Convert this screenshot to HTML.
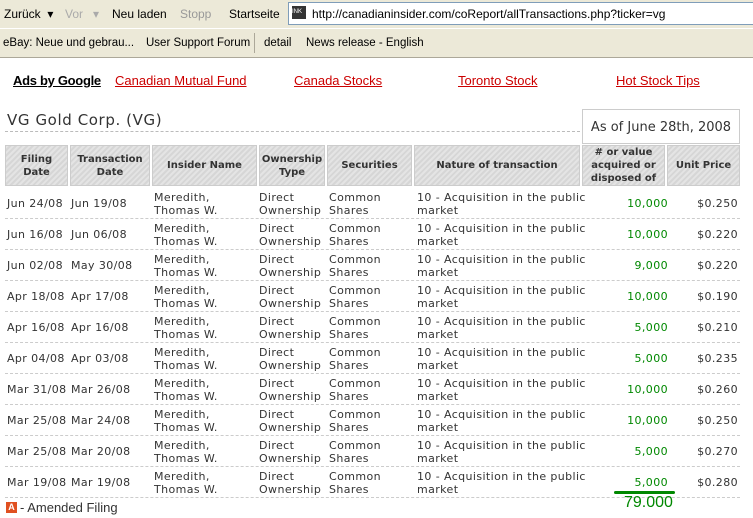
<!DOCTYPE html><html><head><style>
body{margin:0;width:753px;height:518px;overflow:hidden;background:#fff;font-family:"Liberation Sans",sans-serif;position:relative}
.a{position:absolute;white-space:nowrap}
.tb{position:absolute;left:0;top:0;width:753px;height:28px;background:#ece9d8;font-size:12px}
.bb{position:absolute;left:0;top:28px;width:753px;height:28px;background:#ece9d8;border-top:1px solid #fff;border-bottom:1px solid #aca899;font-size:11.5px}
.ad{font-size:13px;color:#c00;text-decoration:underline;top:73px}
.h{position:absolute;top:145px;height:41px;background:repeating-linear-gradient(135deg,#e4e4e4 0 2px,#d6d6d6 2px 4px);border:1px solid #ccc;box-sizing:border-box;font:bold 10px "DejaVu Sans",sans-serif;color:#333;display:flex;align-items:center;justify-content:center;text-align:center;line-height:13px}
.r{position:absolute;left:5px;width:735px;height:31px;border-bottom:1px dashed #ccc;font:11px "DejaVu Sans",sans-serif;color:#333;line-height:13px;letter-spacing:0.4px}
.r div{position:absolute;top:4px}
.g{color:#080}
</style></head><body>
<div class="tb">
<span class="a" style="left:4px;top:7px">Zurück &nbsp;▾</span>
<span class="a" style="left:65px;top:7px;color:#aaa">Vor &nbsp;&nbsp;▾</span>
<span class="a" style="left:112px;top:7px">Neu laden</span>
<span class="a" style="left:180px;top:7px;color:#999">Stopp</span>
<span class="a" style="left:229px;top:7px">Startseite</span>
<div class="a" style="left:288px;top:2px;width:470px;height:21px;background:#fff;border:1px solid #7f9db9"></div>
<div class="a" style="left:292px;top:6px;width:14px;height:13px;background:#333;color:#fff;font-size:6px;line-height:13px">INK</div>
<span class="a" style="left:312px;top:7px">http://canadianinsider.com/coReport/allTransactions.php?ticker=vg</span>
</div>
<div class="bb">
<span class="a" style="left:3px;top:8px">eBay: Neue und gebrau...</span>
<span class="a" style="left:146px;top:8px">User Support Forum</span>
<div class="a" style="left:254px;top:4px;width:1px;height:20px;background:#aca899"></div>
<span class="a" style="left:264px;top:8px">detail</span>
<span class="a" style="left:306px;top:8px">News release - English</span>
</div>
<span class="a" style="left:13px;top:73px;font-size:13px;font-weight:bold;text-decoration:underline;letter-spacing:-0.3px">Ads by Google</span>
<span class="a ad" style="left:115px">Canadian Mutual Fund</span>
<span class="a ad" style="left:294px">Canada Stocks</span>
<span class="a ad" style="left:458px">Toronto Stock</span>
<span class="a ad" style="left:616px">Hot Stock Tips</span>
<span class="a" style="left:7px;top:111px;font:15px 'DejaVu Sans',sans-serif;color:#333;letter-spacing:0.6px">VG Gold Corp. (VG)</span>
<div class="a" style="left:5px;top:131px;width:575px;border-bottom:1px dashed #bbb"></div>
<div class="a" style="left:582px;top:109px;width:156px;height:33px;border:1px solid #ccc;font:13px 'DejaVu Sans',sans-serif;color:#333;line-height:35px;text-align:center">As of June 28th, 2008</div>
<div class="h" style="left:5px;width:63px">Filing<br>Date</div>
<div class="h" style="left:70px;width:80px">Transaction<br>Date</div>
<div class="h" style="left:152px;width:105px">Insider Name</div>
<div class="h" style="left:259px;width:66px">Ownership<br>Type</div>
<div class="h" style="left:327px;width:85px">Securities</div>
<div class="h" style="left:414px;width:166px">Nature of transaction</div>
<div class="h" style="left:582px;width:83px"># or value<br>acquired or<br>disposed of</div>
<div class="h" style="left:667px;width:73px">Unit Price</div>
<div class="r" style="top:187px"><div style="left:2px;top:10px">Jun 24/08</div><div style="left:66px;top:10px">Jun 19/08</div><div style="left:149px">Meredith,<br>Thomas W.</div><div style="left:254px">Direct<br>Ownership</div><div style="left:324px">Common<br>Shares</div><div style="left:412px">10 - Acquisition in the public<br>market</div><div class="g" style="right:72px;top:10px">10,000</div><div style="right:2px;top:10px">$0.250</div></div>
<div class="r" style="top:218px"><div style="left:2px;top:10px">Jun 16/08</div><div style="left:66px;top:10px">Jun 06/08</div><div style="left:149px">Meredith,<br>Thomas W.</div><div style="left:254px">Direct<br>Ownership</div><div style="left:324px">Common<br>Shares</div><div style="left:412px">10 - Acquisition in the public<br>market</div><div class="g" style="right:72px;top:10px">10,000</div><div style="right:2px;top:10px">$0.220</div></div>
<div class="r" style="top:249px"><div style="left:2px;top:10px">Jun 02/08</div><div style="left:66px;top:10px">May 30/08</div><div style="left:149px">Meredith,<br>Thomas W.</div><div style="left:254px">Direct<br>Ownership</div><div style="left:324px">Common<br>Shares</div><div style="left:412px">10 - Acquisition in the public<br>market</div><div class="g" style="right:72px;top:10px">9,000</div><div style="right:2px;top:10px">$0.220</div></div>
<div class="r" style="top:280px"><div style="left:2px;top:10px">Apr 18/08</div><div style="left:66px;top:10px">Apr 17/08</div><div style="left:149px">Meredith,<br>Thomas W.</div><div style="left:254px">Direct<br>Ownership</div><div style="left:324px">Common<br>Shares</div><div style="left:412px">10 - Acquisition in the public<br>market</div><div class="g" style="right:72px;top:10px">10,000</div><div style="right:2px;top:10px">$0.190</div></div>
<div class="r" style="top:311px"><div style="left:2px;top:10px">Apr 16/08</div><div style="left:66px;top:10px">Apr 16/08</div><div style="left:149px">Meredith,<br>Thomas W.</div><div style="left:254px">Direct<br>Ownership</div><div style="left:324px">Common<br>Shares</div><div style="left:412px">10 - Acquisition in the public<br>market</div><div class="g" style="right:72px;top:10px">5,000</div><div style="right:2px;top:10px">$0.210</div></div>
<div class="r" style="top:342px"><div style="left:2px;top:10px">Apr 04/08</div><div style="left:66px;top:10px">Apr 03/08</div><div style="left:149px">Meredith,<br>Thomas W.</div><div style="left:254px">Direct<br>Ownership</div><div style="left:324px">Common<br>Shares</div><div style="left:412px">10 - Acquisition in the public<br>market</div><div class="g" style="right:72px;top:10px">5,000</div><div style="right:2px;top:10px">$0.235</div></div>
<div class="r" style="top:373px"><div style="left:2px;top:10px">Mar 31/08</div><div style="left:66px;top:10px">Mar 26/08</div><div style="left:149px">Meredith,<br>Thomas W.</div><div style="left:254px">Direct<br>Ownership</div><div style="left:324px">Common<br>Shares</div><div style="left:412px">10 - Acquisition in the public<br>market</div><div class="g" style="right:72px;top:10px">10,000</div><div style="right:2px;top:10px">$0.260</div></div>
<div class="r" style="top:404px"><div style="left:2px;top:10px">Mar 25/08</div><div style="left:66px;top:10px">Mar 24/08</div><div style="left:149px">Meredith,<br>Thomas W.</div><div style="left:254px">Direct<br>Ownership</div><div style="left:324px">Common<br>Shares</div><div style="left:412px">10 - Acquisition in the public<br>market</div><div class="g" style="right:72px;top:10px">10,000</div><div style="right:2px;top:10px">$0.250</div></div>
<div class="r" style="top:435px"><div style="left:2px;top:10px">Mar 25/08</div><div style="left:66px;top:10px">Mar 20/08</div><div style="left:149px">Meredith,<br>Thomas W.</div><div style="left:254px">Direct<br>Ownership</div><div style="left:324px">Common<br>Shares</div><div style="left:412px">10 - Acquisition in the public<br>market</div><div class="g" style="right:72px;top:10px">5,000</div><div style="right:2px;top:10px">$0.270</div></div>
<div class="r" style="top:466px"><div style="left:2px;top:10px">Mar 19/08</div><div style="left:66px;top:10px">Mar 19/08</div><div style="left:149px">Meredith,<br>Thomas W.</div><div style="left:254px">Direct<br>Ownership</div><div style="left:324px">Common<br>Shares</div><div style="left:412px">10 - Acquisition in the public<br>market</div><div class="g" style="right:72px;top:10px">5,000</div><div style="right:2px;top:10px">$0.280</div></div>
<div class="a" style="left:614px;top:491px;width:61px;height:3px;background:#080;border-radius:2px"></div>
<span class="a" style="left:624px;top:494px;font-size:16px;color:#080">79.000</span>
<div class="a" style="left:6px;top:502px;width:11px;height:11px;background:#e05020;color:#fff;font-size:9px;font-weight:bold;text-align:center;line-height:11px">A</div>
<span class="a" style="left:20px;top:500px;font-size:13px;color:#333">- Amended Filing</span>
</body></html>
